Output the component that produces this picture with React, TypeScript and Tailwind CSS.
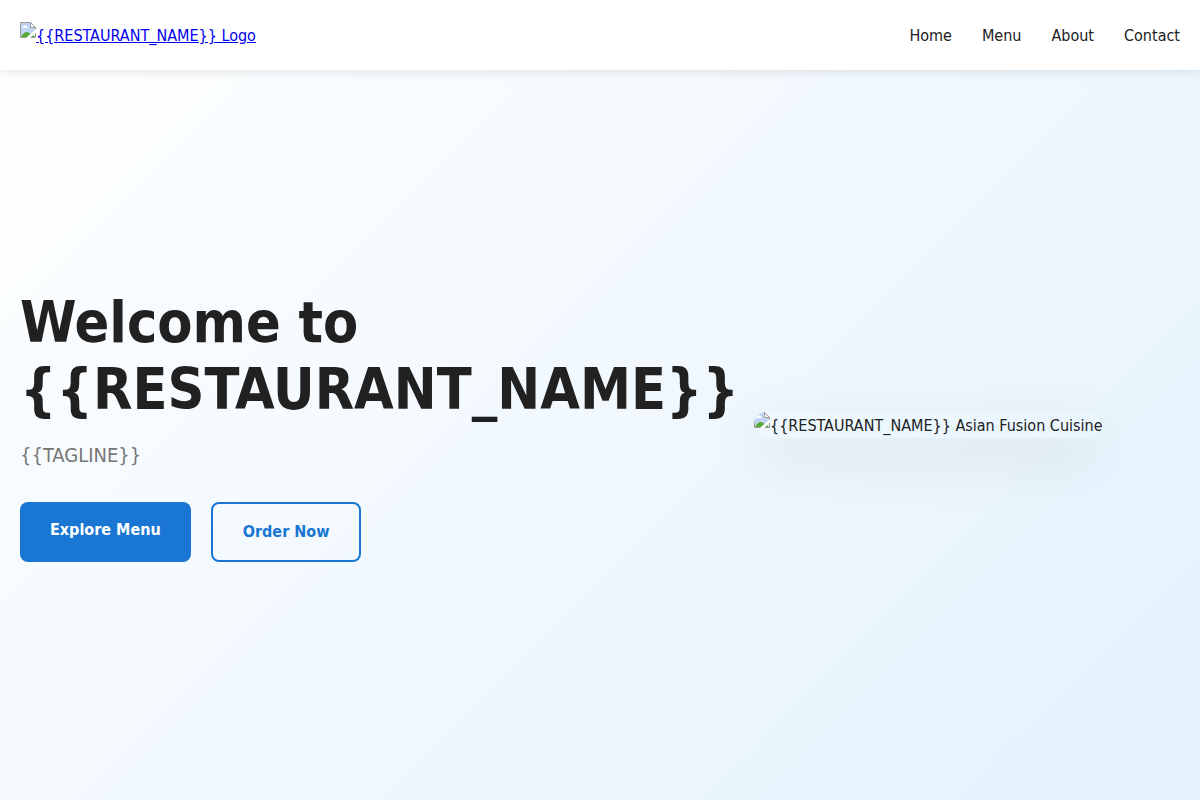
const links = ["Home", "Menu", "About", "Contact"];

function BrokenImage() {
  return (
    <svg width="16" height="16" viewBox="0 0 16 16" className="shrink-0" aria-hidden="true">
      <path d="M1 1H10.5L15 5.5V8L7 15H1Z" fill="#c3d5f6" />
      <path d="M2 6C2 4.8 3 4.4 3.8 4.5C4.2 3 6.4 3 6.8 4.5C7.8 4.5 8 5.6 7.4 6Z" fill="#fff" />
      <path d="M1 15C2.5 12 4.5 10 6.5 10C8.4 10 9.6 11 10.4 12L7 15Z" fill="#57ab35" />
      <path d="M10.5 1V5.5H15Z" fill="#fff" />
      <path d="M0.5 15.5V0.5H10.5L15.5 5.5V7.5M10.5 0.5V5.5H15.5M0.5 15.5H6.5" fill="none" stroke="#9a9a9a" />
      <path d="M11 15L13 13L15 15Z" fill="#57ab35" />
      <path d="M10.5 15.5H15.5V11" fill="none" stroke="#9a9a9a" />
      <path d="M6.5 16L16 7.5V10L10 16Z" fill="#fff" />
    </svg>
  );
}

export default function App() {
  return (
    <div className="flex min-h-screen flex-col bg-[linear-gradient(135deg,#ffffff_0%,#e3f2fd_100%)] font-['DejaVu_Sans_Condensed','DejaVu_Sans',sans-serif] text-base text-[#212121]">
      <header className="flex h-[70px] items-center justify-between bg-white px-5 shadow-[0_2px_10px_rgba(0,0,0,0.1)]">
        <a href="#home" className="flex h-[26px] leading-7 text-[#0000ee] underline">
          <BrokenImage />
          {"{{RESTAURANT_NAME}} Logo"}
        </a>
        <nav className="flex gap-[30px] pt-px">
          {links.map((l) => (
            <a key={l} href={"#" + l.toLowerCase()}>{l}</a>
          ))}
        </nav>
      </header>
      <main className="flex flex-1 flex-wrap items-center gap-3 px-5 pb-5">
        <section className="basis-[722px]">
          <h1 className="text-[57px] leading-[67px] font-bold">
            Welcome to
            <br />
            {"{{RESTAURANT_NAME}}"}
          </h1>
          <p className="mt-4 text-xl leading-[33px] text-[#757575]">{"{{TAGLINE}}"}</p>
          <div className="mt-[30px] flex gap-5 leading-[26px] font-bold">
            <a href="#menu" className="rounded-lg bg-[#1976d2] px-[30px] py-[15px] text-white">Explore Menu</a>
            <a href="#order" className="rounded-lg border-2 border-[#1976d2] px-[30px] py-[15px] text-[#1976d2]">Order Now</a>
          </div>
        </section>
        <div className="flex h-[26px] overflow-hidden rounded-[20px] leading-7 shadow-[0_20px_60px_rgba(0,0,0,0.1)]">
          <BrokenImage />
          {"{{RESTAURANT_NAME}} Asian Fusion Cuisine"}
        </div>
      </main>
    </div>
  );
}
